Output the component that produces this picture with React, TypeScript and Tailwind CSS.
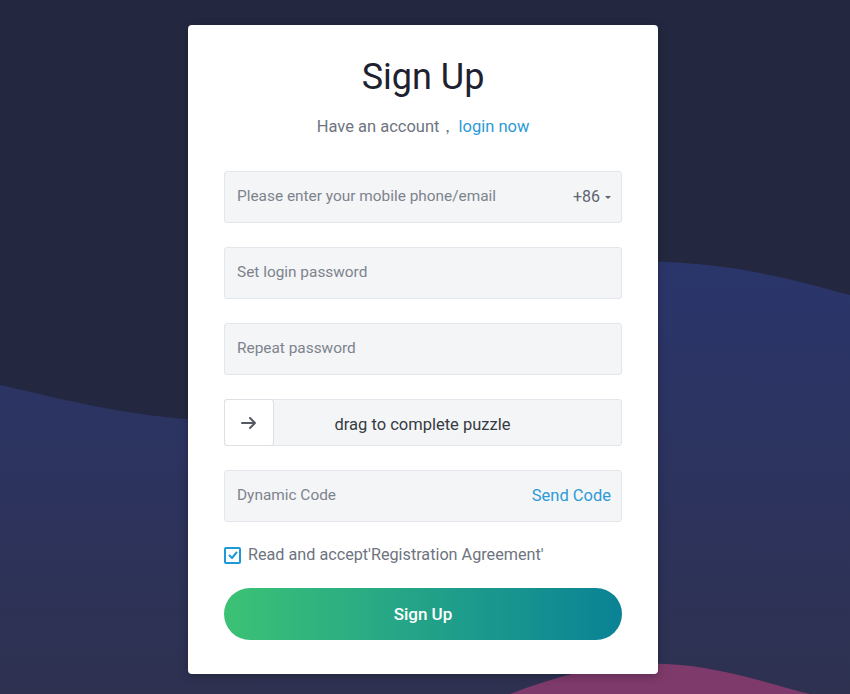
import React from "react";

function Background() {
  return (
    <svg
      className="absolute inset-0 h-full w-full"
      viewBox="0 0 850 694"
      preserveAspectRatio="none"
    >
      <defs>
        <linearGradient id="blueWave" x1="0" y1="0" x2="0" y2="1">
          <stop offset="0" stopColor="#2a356b" />
          <stop offset="1" stopColor="#2e3150" />
        </linearGradient>
      </defs>
      <path
        d="M0 385 C 110 410, 230 445, 380 395 S 580 258, 665 262 S 800 282, 850 295 L 850 694 L 0 694 Z"
        fill="url(#blueWave)"
      />
      <path
        d="M510 694 C 560 675, 610 662, 665 664 C 720 666, 770 684, 810 694 Z"
        fill="#7e3a6a"
      />
    </svg>
  );
}

function Field({ placeholder, right }: { placeholder: string; right?: React.ReactNode }) {
  return (
    <div className="flex h-[52px] items-center justify-between rounded-[3px] border border-[#e3e6ea] bg-[#f4f5f6] pl-3 pr-[10px]">
      <span className="text-[15.4px] text-[#7d838e]">{placeholder}</span>
      {right}
    </div>
  );
}

export default function App() {
  return (
    <div
      className="relative flex h-[694px] w-[850px] justify-center overflow-hidden bg-[#232840] pr-[4px]"
      style={{ fontFamily: "Roboto, 'Liberation Sans', sans-serif" }}
    >
      <Background />

      <div className="relative mt-[25px] h-[649px] w-[470px] rounded-[4px] bg-white px-9 pt-[32px] shadow-[0_2px_8px_rgba(0,0,0,0.25)]">
        <h1 className="text-center text-[36px] leading-[40px] text-[#1e2130]">Sign Up</h1>
        <p className="mt-[19px] text-center text-[16.5px] leading-[22px] text-[#6e7480]">
          Have an account，<span className="ml-[2px] text-[#2c9ad6]">login now</span>
        </p>

        <div className="mt-[33px] flex flex-col">
          <Field
            placeholder="Please enter your mobile phone/email"
            right={
              <span className="flex items-center gap-[5px] text-[16px] text-[#5f6470]">
                +86
                <span className="mt-[1px] h-0 w-0 border-x-[3px] border-t-[3px] border-x-transparent border-t-[#5f6470]" />
              </span>
            }
          />
          <div className="mt-[24px]">
            <Field placeholder="Set login password" />
          </div>
          <div className="mt-[24px]">
            <Field placeholder="Repeat password" />
          </div>

          <div className="mt-[24px] flex h-[47px] items-center rounded-[3px] border border-[#e3e6ea] bg-[#f4f5f6]">
            <div className="flex h-[47px] w-[50px] items-center justify-center rounded-[3px] border border-[#dcdfe3] bg-white -ml-px">
              <svg width="16" height="14" viewBox="0 0 16 14" fill="none">
                <path
                  d="M1 7 H14 M9 2 L14 7 L9 12"
                  stroke="#555a63"
                  strokeWidth="2"
                  strokeLinecap="round"
                  strokeLinejoin="round"
                />
              </svg>
            </div>
            <span className="flex-1 pr-[50px] pt-[6px] text-center text-[16.5px] text-[#363a42]">
              drag to complete puzzle
            </span>
          </div>

          <div className="mt-[24px]">
            <Field
              placeholder="Dynamic Code"
              right={<span className="text-[16.5px] text-[#2c9ad6]">Send Code</span>}
            />
          </div>

          <div className="mt-[21px] flex items-center gap-[7px]">
            <span className="flex h-[17px] w-[17px] items-center justify-center rounded-[2px] border-2 border-[#1d99d6] bg-white">
              <svg width="10" height="9" viewBox="0 0 10 9" fill="none">
                <path
                  d="M1.5 4.5 L4 7 L8.5 1.5"
                  stroke="#1d99d6"
                  strokeWidth="2"
                  strokeLinecap="round"
                  strokeLinejoin="round"
                />
              </svg>
            </span>
            <span className="text-[16.2px] text-[#6e7480]">Read and accept'Registration Agreement'</span>
          </div>

          <button className="mt-[21px] h-[52px] w-full rounded-full bg-gradient-to-r from-[#3cc274] to-[#0a8295] text-[17px] font-medium text-white">
            Sign Up
          </button>
        </div>
      </div>
    </div>
  );
}
